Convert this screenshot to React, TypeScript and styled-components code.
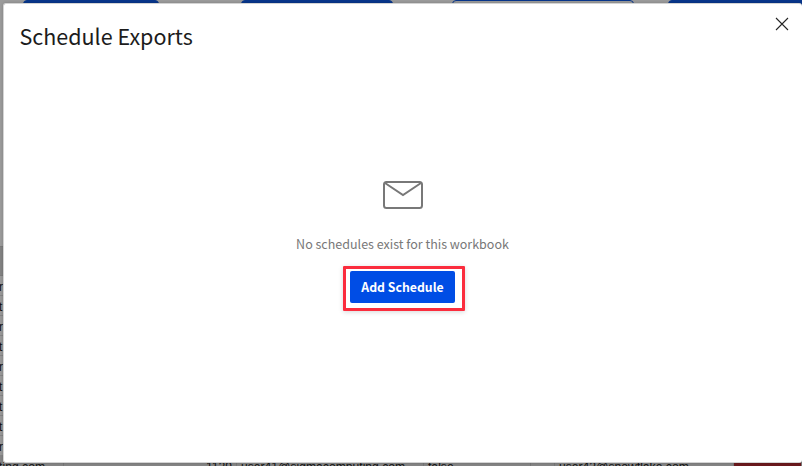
import React from 'react';
import styled, { createGlobalStyle } from 'styled-components';

const GlobalStyle = createGlobalStyle`
  * { box-sizing: border-box; }
  html, body { margin: 0; overflow: hidden; }
`;

const Page = styled.div`
  position: relative;
  width: 802px;
  height: 466px;
  overflow: hidden;
  background: #9b9b9b;
  font-family: "Liberation Sans", Arial, sans-serif;
`;

const FilterBar = styled.div`
  display: flex;
  height: 246px;
  padding-left: 23px;
`;

const FilterButton = styled.div<{ $width: number; $gap: number; $outline?: boolean }>`
  flex: none;
  width: ${(p) => p.$width}px;
  height: 32px;
  margin-right: ${(p) => p.$gap}px;
  border: 1px solid #08368b;
  border-radius: 4px;
  background: ${(p) => (p.$outline ? '#9b9b9b' : '#08368b')};
`;

const TableHead = styled.div`
  height: 30px;
  background: #828282;
  border-top: 1px solid #7b7b7b;
  border-bottom: 1px solid #7b7b7b;
`;

const TableRow = styled.div`
  height: 20px;
  border-bottom: 1px solid #858585;
  background: #989898;
  color: #111;
  font-size: 12px;
  line-height: 22px;
  text-indent: -1px;
  white-space: nowrap;
`;

const LastRow = styled.div`
  display: grid;
  grid-template-columns: 64px 173px 187px 107px 24px 179px 1fr;
  height: 20px;
  background: #858585;
  color: #111;
  font-size: 12.15px;
  line-height: 23px;
`;

const Cell = styled.div<{ $align?: 'right'; $danger?: boolean }>`
  display: flex;
  justify-content: ${(p) => (p.$align ? 'flex-end' : 'flex-start')};
  padding: 0 4px;
  white-space: nowrap;
  border-right: 1px solid #777;
  background: ${(p) => (p.$danger ? '#6b191d' : 'transparent')};
`;

const FirstCell = styled(Cell)`
  justify-content: flex-end;
  padding-right: 18px;
`;

const Dialog = styled.section`
  position: absolute;
  top: 3px;
  left: 3px;
  width: 799px;
  height: 460px;
  display: flex;
  flex-direction: column;
  background: #fff;
  border: 1px solid #d4d4d4;
  border-right: 0;
  border-radius: 3px;
  box-shadow: 0 0 3px rgba(0, 0, 0, 0.2);
  font-family: "Noto Sans CJK SC", "Noto Sans", sans-serif;
`;

const DialogHeader = styled.header`
  display: flex;
  justify-content: space-between;
  height: 66px;
  padding: 13px 13px 0 15.5px;
`;

const Title = styled.h1`
  margin: 0;
  color: #1c1c1c;
  font-size: 21.5px;
  line-height: 38px;
  font-weight: 400;
  white-space: nowrap;
`;

const CloseButton = styled.button`
  display: block;
  width: 14px;
  height: 14px;
  padding: 0;
  border: 0;
  background: none;
`;

const EmptyState = styled.div`
  display: flex;
  flex-direction: column;
  align-items: center;
  width: 797px;
  padding-top: 111px;
`;

const Message = styled.p`
  margin: 25px 0 0;
  color: #787878;
  font-size: 12.5px;
  line-height: 20px;
  white-space: nowrap;
`;

const Highlight = styled.div`
  display: flex;
  width: 122px;
  height: 45px;
  margin: 12px 0 0 3px;
  padding: 2px 0 0 4px;
  border: 3px solid #fb2c3d;
  border-radius: 1px;
  box-shadow: 0 1px 5px rgba(0, 0, 0, 0.16);
`;

const PrimaryButton = styled.button`
  width: 105px;
  height: 32px;
  padding: 0;
  border: 0;
  border-radius: 2px;
  background: #004de5;
  color: #fff;
  font-family: inherit;
  font-size: 12.3px;
  line-height: 32px;
  font-weight: 700;
  white-space: nowrap;
`;

const letters = ['r', 't', 'r', 't', 'r', 't', 't', 't', 'r'];

export default function App() {
  return (
    <>
      <GlobalStyle />
      <Page>
        <FilterBar>
          <FilterButton $width={136} $gap={82} />
          <FilterButton $width={152} $gap={59} />
          <FilterButton $width={182} $gap={34} $outline />
          <FilterButton $width={154} $gap={0} />
        </FilterBar>
        <TableHead />
        {letters.map((letter, i) => (
          <TableRow key={i}>{letter}</TableRow>
        ))}
        <LastRow>
          <FirstCell>computing.com</FirstCell>
          <Cell $align="right">1129</Cell>
          <Cell>user41@sigmacomputing.com</Cell>
          <Cell>false</Cell>
          <Cell />
          <Cell>user42@snowflake.com</Cell>
          <Cell $danger />
        </LastRow>
        <Dialog>
          <DialogHeader>
            <Title>Schedule Exports</Title>
            <CloseButton aria-label="Close">
              <svg width="14" height="14" viewBox="0 0 14 14" fill="none" stroke="#252525" strokeWidth="1.1">
                <path d="M1 1l12 12M13 1L1 13" />
              </svg>
            </CloseButton>
          </DialogHeader>
          <EmptyState>
            <svg width="40" height="28" viewBox="0 0 40 28" fill="none" stroke="#787878" strokeWidth="2">
              <rect x="1" y="1" width="38" height="26" rx="2.5" />
              <path d="M2 2l18 12L38 2" />
            </svg>
            <Message>No schedules exist for this workbook</Message>
            <Highlight>
              <PrimaryButton>Add Schedule</PrimaryButton>
            </Highlight>
          </EmptyState>
        </Dialog>
      </Page>
    </>
  );
}
